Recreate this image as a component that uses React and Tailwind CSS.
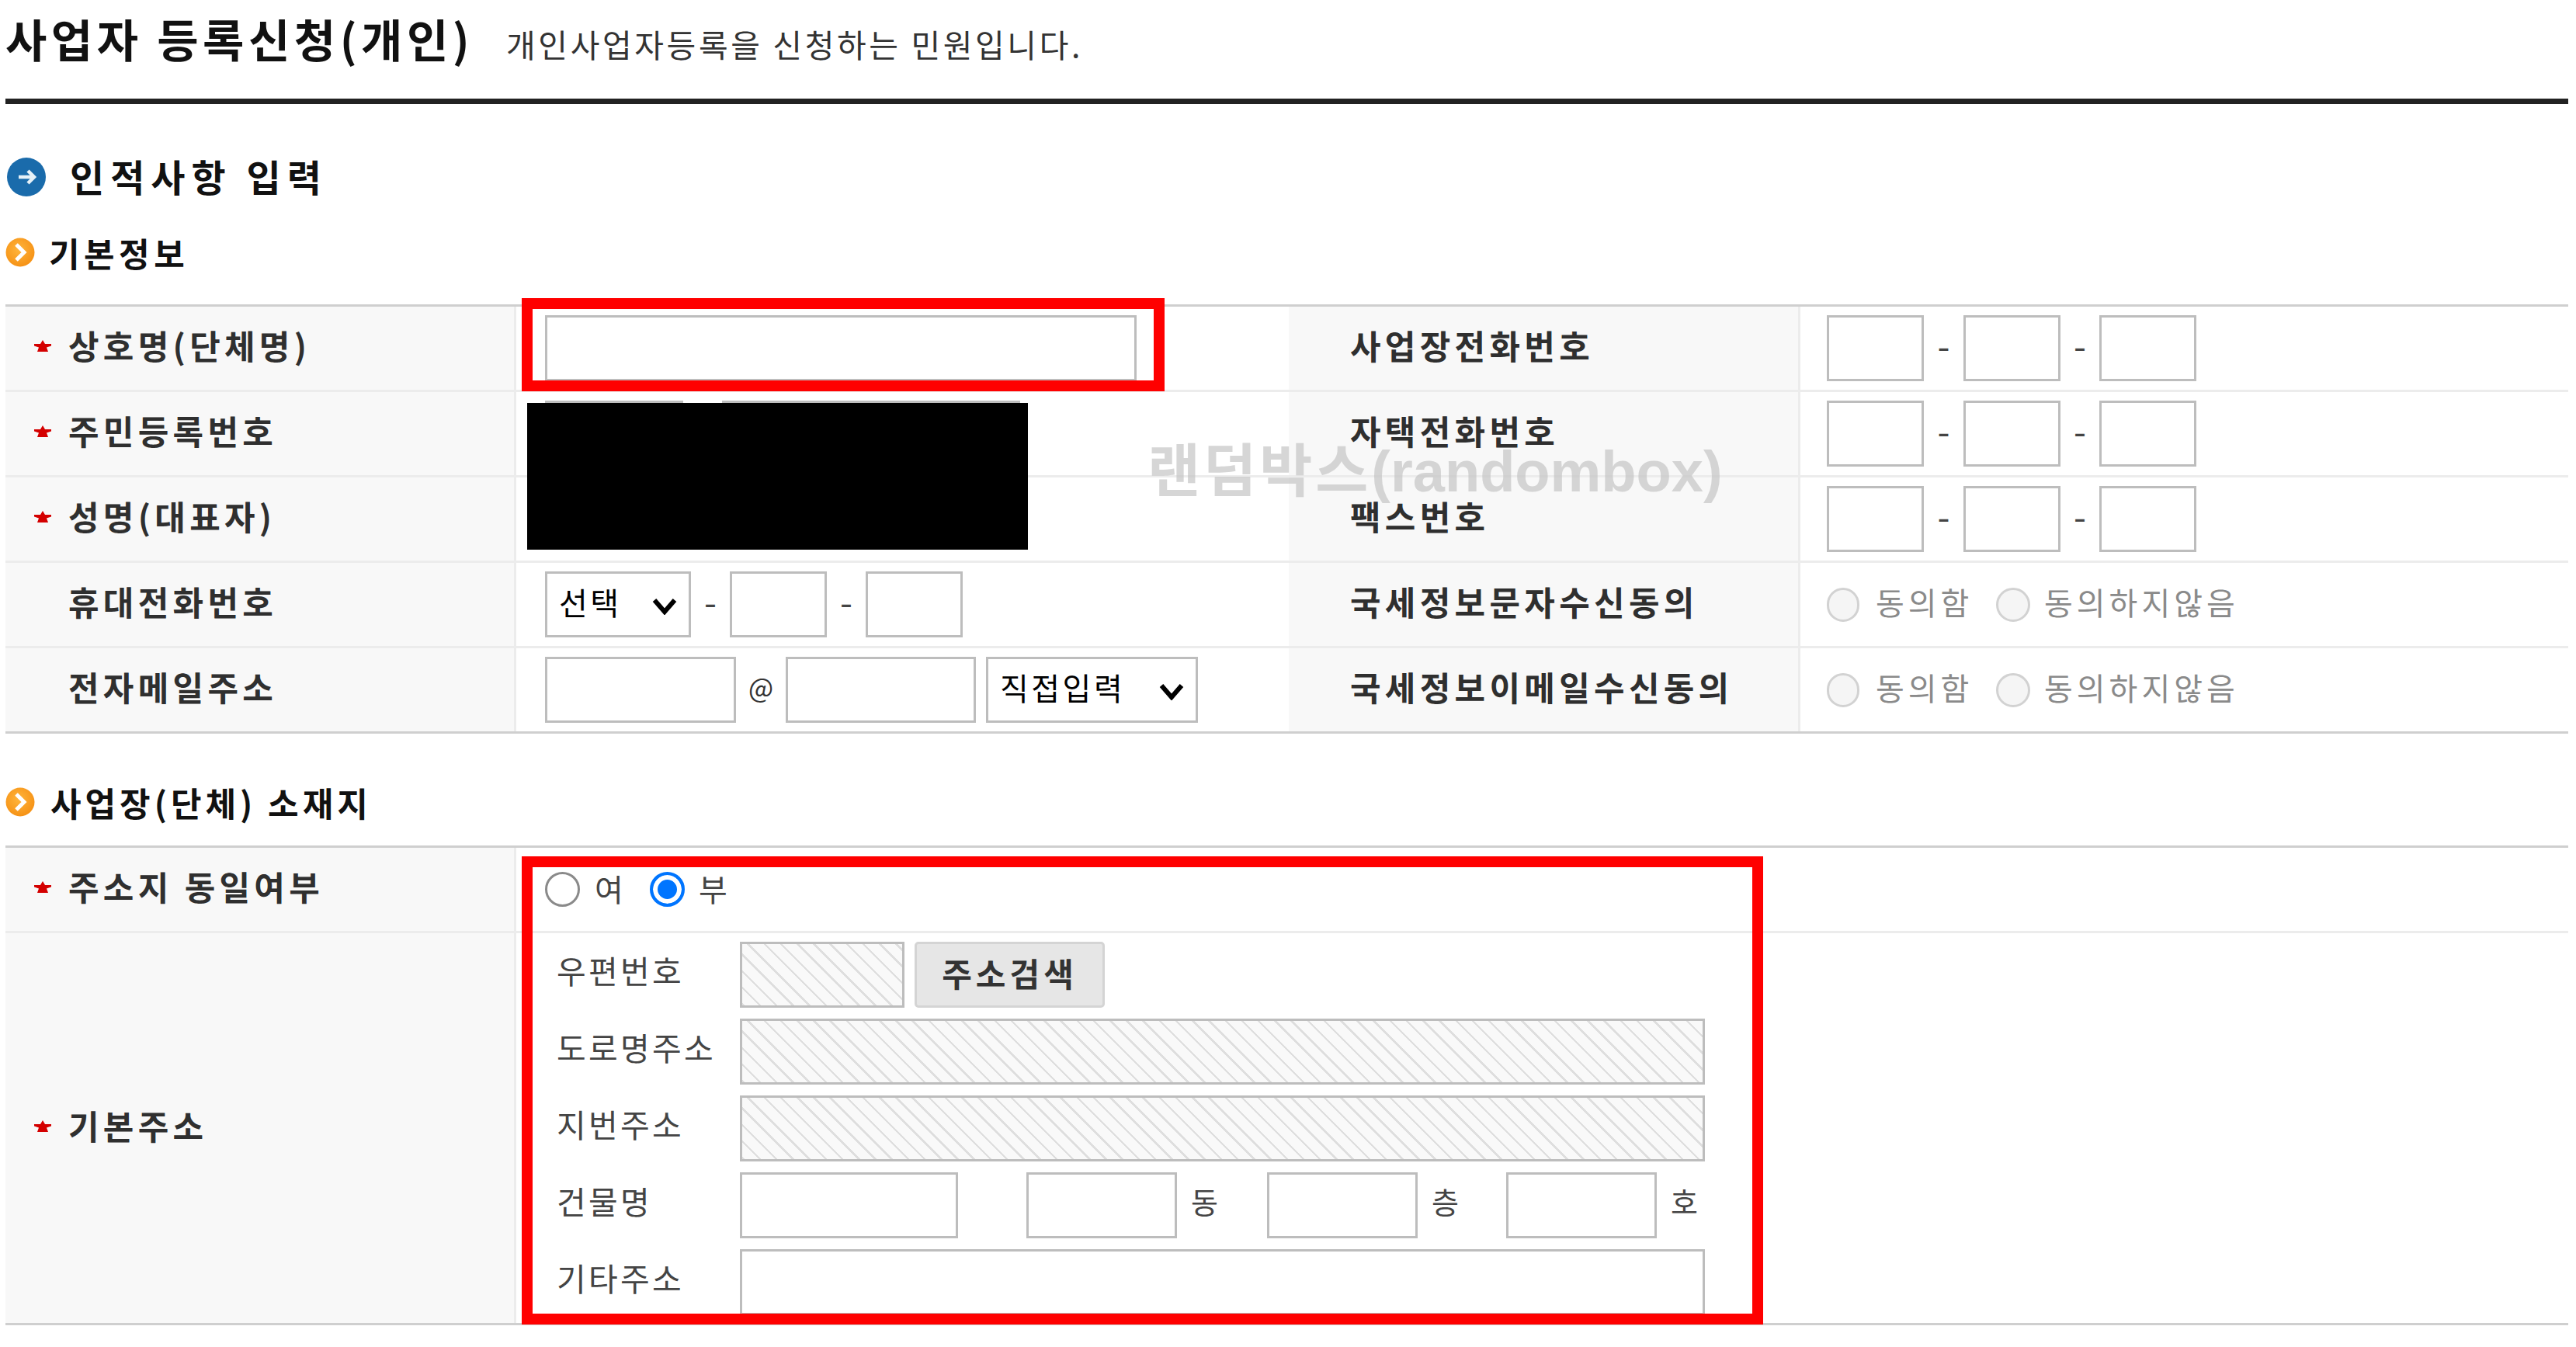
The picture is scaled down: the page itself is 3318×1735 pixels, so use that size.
import React from "react";

const inputCls = "h-[85px] border-[3px] border-[#bdbdbd] bg-white shrink-0";
const hatch = "bg-[repeating-linear-gradient(45deg,#dedede_0px,#dedede_2.500px,#f9f9f9_2.500px,#f9f9f9_15px)]";

function BlueIcon() {
  return (
    <svg width="50" height="52" viewBox="0 0 50 52" className="shrink-0">
      <circle cx="25" cy="26" r="25" fill="#1a6bab" />
      <path d="M15 26h19M27 18l8 8-8 8" fill="none" stroke="#e6f1f8" strokeWidth="4.5" />
    </svg>
  );
}

function OrangeIcon() {
  return (
    <svg width="38" height="40" viewBox="0 0 38 40" className="shrink-0">
      <defs>
        <radialGradient id="og" cx="45%" cy="40%" r="65%">
          <stop offset="0%" stopColor="#ffb53c" />
          <stop offset="100%" stopColor="#f58f12" />
        </radialGradient>
      </defs>
      <circle cx="19" cy="20" r="18.5" fill="url(#og)" />
      <path d="M14 10l10 10-10 10" fill="none" stroke="#fff" strokeWidth="5" />
    </svg>
  );
}

function Star() {
  return (
    <svg width="22" height="15" viewBox="0 0 22 15" className="shrink-0 -translate-y-[3px]">
      <path d="M11 0l3 5h8v2.500l-6 2 2 5.500H4l2-5.500-6-2V5h8z" fill="#d40000" />
    </svg>
  );
}

function Th({ children, req }) {
  return (
    <div className="w-[655px] shrink-0 h-full bg-[#f8f8f8] flex items-center pl-[37px] text-[43px] font-bold tracking-[5.300px] text-[#2f2f2f] whitespace-nowrap">
      <span className="w-[44px] shrink-0 flex">{req && <Star />}</span>
      <span className="-translate-y-[4px]">{children}</span>
    </div>
  );
}

function Th2({ children }) {
  return (
    <div className="w-[656px] shrink-0 h-full bg-[#f8f8f8] flex items-center pl-[79px] text-[43px] font-bold tracking-[5.300px] text-[#2f2f2f] whitespace-nowrap">
      <span className="-translate-y-[4px]">{children}</span>
    </div>
  );
}

function Dash({ w }) {
  return <span className={`${w} shrink-0 text-center text-[46px] leading-none text-[#444] -translate-y-[6px]`}>-</span>;
}

function Phone() {
  return (
    <div className="flex-1 h-full border-l-[3px] border-[#ececec] flex items-center pl-[34px]">
      <input className={`${inputCls} w-[125px]`} />
      <Dash w="w-[51px]" />
      <input className={`${inputCls} w-[125px]`} />
      <Dash w="w-[50px]" />
      <input className={`${inputCls} w-[125px]`} />
    </div>
  );
}

function Consent() {
  return (
    <div className="flex-1 h-full border-l-[3px] border-[#ececec] flex items-center pl-[34px] text-[40px] tracking-[5px] text-[#8a8a8a] whitespace-nowrap">
      <input type="radio" disabled className="appearance-none w-[42px] h-[44px] rounded-full border-[3px] border-[#d2d2d2] bg-[#f5f5f5] shrink-0" />
      <span className="ml-[21px] w-[155px] -translate-y-[4px]">동의함</span>
      <input type="radio" disabled className="appearance-none w-[44px] h-[44px] rounded-full border-[3px] border-[#d2d2d2] bg-[#f5f5f5] shrink-0" />
      <span className="ml-[18px] -translate-y-[4px]">동의하지않음</span>
    </div>
  );
}

function Chevron() {
  return (
    <svg width="32" height="22" viewBox="0 0 32 22" className="absolute right-[18px] top-[34px] pointer-events-none">
      <path d="M3 3l13 15L29 3" fill="none" stroke="#000" strokeWidth="6" />
    </svg>
  );
}

function Select({ w, label }) {
  return (
    <div className={`relative ${w} h-[85px] shrink-0`}>
      <select className="appearance-none w-full h-full border-[3px] border-[#bdbdbd] bg-white pl-[15px] pb-[8px] text-[40px] tracking-[3.500px] text-black">
        <option>{label}</option>
      </select>
      <Chevron />
    </div>
  );
}

function Row({ children, last }) {
  return (
    <div className={`flex h-[110px] border-b-[3px] ${last ? "border-[#cfcfcf]" : "border-[#ececec]"}`}>{children}</div>
  );
}

function Td1({ children }) {
  return (
    <div className="w-[998px] shrink-0 h-full border-l-[3px] border-[#ececec] flex items-center pl-[37px]">{children}</div>
  );
}

function AddrRow({ label, children }) {
  return (
    <div className="flex items-center h-[85px]">
      <span className="w-[251px] shrink-0 pl-[15px] text-[41px] tracking-[3.300px] text-[#444] whitespace-nowrap -translate-y-[6px]">{label}</span>
      {children}
    </div>
  );
}

function Unit({ children, w }) {
  return <span className={`${w} shrink-0 pl-[18px] text-[38px] text-[#444] -translate-y-[6px]`}>{children}</span>;
}

export default function App() {
  return (
    <div className="relative w-[3318px] h-[1735px] overflow-hidden bg-white pl-[7px] pr-[10px] font-['Noto_Sans_CJK_KR','Liberation_Sans',sans-serif]">
      <header className="flex items-baseline h-[134px] border-b-[7px] border-[#222] pt-[6px] whitespace-nowrap">
        <h1 className="text-[58px] font-semibold tracking-[5.500px] text-[#111] w-[645px] shrink-0">사업자 등록신청(개인)</h1>
        <p className="text-[41px] tracking-[3.600px] text-[#333]">개인사업자등록을 신청하는 민원입니다.</p>
      </header>

      <h2 className="mt-[68px] h-[52px] flex items-center gap-[31px] pl-[2px] text-[48px] font-bold tracking-[8px] text-[#111]">
        <BlueIcon />
        <span className="-translate-y-[2px]">인적사항 입력</span>
      </h2>

      <h3 className="mt-[51px] h-[40px] flex items-center gap-[18px] text-[43px] font-bold tracking-[5.500px] text-[#111]">
        <OrangeIcon />
        <span>기본정보</span>
      </h3>

      <section className="mt-[47px] border-t-[3px] border-[#cfcfcf]">
        <Row>
          <Th req>상호명(단체명)</Th>
          <Td1>
            <input className={`${inputCls} w-[762px]`} />
          </Td1>
          <Th2>사업장전화번호</Th2>
          <Phone />
        </Row>
        <Row>
          <Th req>주민등록번호</Th>
          <Td1>
            <input className={`${inputCls} w-[178px]`} />
            <span className="w-[50px] shrink-0" />
            <input className={`${inputCls} w-[384px]`} />
          </Td1>
          <Th2>자택전화번호</Th2>
          <Phone />
        </Row>
        <Row>
          <Th req>성명(대표자)</Th>
          <Td1 />
          <Th2>팩스번호</Th2>
          <Phone />
        </Row>
        <Row>
          <Th>휴대전화번호</Th>
          <Td1>
            <Select w="w-[188px]" label="선택" />
            <Dash w="w-[50px]" />
            <input className={`${inputCls} w-[125px]`} />
            <Dash w="w-[50px]" />
            <input className={`${inputCls} w-[125px]`} />
          </Td1>
          <Th2>국세정보문자수신동의</Th2>
          <Consent />
        </Row>
        <Row last>
          <Th>전자메일주소</Th>
          <Td1>
            <input className={`${inputCls} w-[246px]`} />
            <span className="w-[64px] shrink-0 text-center text-[34px] text-[#333] -translate-y-[4px]">@</span>
            <input className={`${inputCls} w-[245px]`} />
            <span className="w-[13px] shrink-0" />
            <Select w="w-[273px]" label="직접입력" />
          </Td1>
          <Th2>국세정보이메일수신동의</Th2>
          <Consent />
        </Row>
      </section>

      <h3 className="mt-[68px] h-[40px] flex items-center gap-[20px] text-[43px] font-bold tracking-[5px] text-[#111]">
        <OrangeIcon />
        <span>사업장(단체) 소재지</span>
      </h3>

      <section className="mt-[36px] border-t-[3px] border-[#cfcfcf]">
        <Row>
          <Th req>주소지 동일여부</Th>
          <div className="flex-1 h-full border-l-[3px] border-[#ececec] flex items-center pl-[37px] text-[40px] text-[#444]">
            <input type="radio" readOnly name="same" className="appearance-none w-[45px] h-[45px] rounded-full border-[3px] border-[#8a8a8a] bg-white shrink-0" />
            <span className="ml-[19px] w-[71px] -translate-y-[2px]">여</span>
            <input type="radio" readOnly checked name="same" className="appearance-none w-[45px] h-[45px] rounded-full border-[4px] border-[#0075ff] bg-[#0075ff] shadow-[inset_0_0_0_6px_#ffffff] shrink-0" />
            <span className="ml-[18px] -translate-y-[2px]">부</span>
          </div>
        </Row>
        <div className="flex h-[505px] border-b-[3px] border-[#cfcfcf]">
          <Th req>기본주소</Th>
          <div className="flex-1 h-full border-l-[3px] border-[#ececec] flex flex-col gap-[14px] pt-[11px] pl-[37px] overflow-hidden">
            <AddrRow label="우편번호">
              <input readOnly className={`${inputCls} w-[212px] ${hatch}`} />
              <button className="ml-[13px] w-[245px] h-[85px] shrink-0 rounded-[5px] border-[3px] border-[#d4d4d4] bg-[#e6e6e6] pb-[6px] text-[42px] font-bold tracking-[5px] text-[#333]">
                주소검색
              </button>
            </AddrRow>
            <AddrRow label="도로명주소">
              <input readOnly className={`${inputCls} w-[1243px] ${hatch}`} />
            </AddrRow>
            <AddrRow label="지번주소">
              <input readOnly className={`${inputCls} w-[1243px] ${hatch}`} />
            </AddrRow>
            <AddrRow label="건물명">
              <input className={`${inputCls} w-[281px]`} />
              <span className="w-[88px] shrink-0" />
              <input className={`${inputCls} w-[194px]`} />
              <Unit w="w-[116px]">동</Unit>
              <input className={`${inputCls} w-[194px]`} />
              <Unit w="w-[114px]">층</Unit>
              <input className={`${inputCls} w-[194px]`} />
              <Unit w="w-[60px]">호</Unit>
            </AddrRow>
            <AddrRow label="기타주소">
              <input className={`${inputCls} w-[1243px]`} />
            </AddrRow>
          </div>
        </div>
      </section>

      {/* annotations laid over the form */}
      <div className="absolute left-[672px] top-[384px] w-[828px] h-[120px] border-[14px] border-[#ff0000]" />
      <div className="absolute left-[672px] top-[1103px] w-[1599px] h-[603px] border-[14px] border-[#ff0000]" />
      <div className="absolute left-[679px] top-[519px] w-[645px] h-[189px] bg-black" />
      <div className="absolute left-[1478px] top-[558px] text-[74px] leading-[100px] font-bold text-[#c4c4c4]/70 whitespace-nowrap font-['Liberation_Sans','Noto_Sans_CJK_KR',sans-serif]">
        <span className="tracking-[4px]">랜덤박스</span>(randombox)
      </div>
    </div>
  );
}
